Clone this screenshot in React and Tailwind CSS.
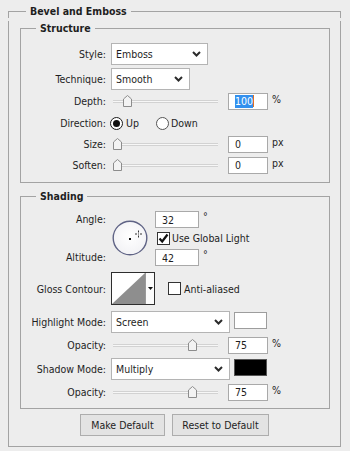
import React from "react";

function Chevron() {
  return (
    <svg width="9" height="6" viewBox="0 0 9 6" className="shrink-0">
      <polyline points="1,1 4.5,4.5 8,1" fill="none" stroke="#2b2b2b" strokeWidth="2" />
    </svg>
  );
}

function Select({ value, w }) {
  return (
    <div className={`${w} h-[22px] shrink-0 bg-white border border-[#b4b4b4] flex items-center justify-between pl-[4px] pr-[6px]`}>
      <span>{value}</span>
      <Chevron />
    </div>
  );
}

function Num({ children, w }) {
  return (
    <div className={`${w} h-[17px] shrink-0 bg-white border border-[#a9a9a9] flex items-center pl-[6px]`}>
      {children}
    </div>
  );
}

function Slider({ pct }) {
  const left = 6 + pct * 101 - 4.5;
  return (
    <div className="relative w-[107px] h-[18px] shrink-0">
      <div className="absolute left-[2px] right-0 top-[8px] h-[3px] border-y border-[#d2d2d2] bg-[#f7f7f7]" />
      <svg className="absolute top-[3px]" style={{ left }} width="9" height="12" viewBox="0 0 9 12">
        <path d="M0.5,11.5 V4 L4.5,0.5 L8.5,4 V11.5 Z" fill="#f3f3f3" stroke="#8c8c8c" />
      </svg>
    </div>
  );
}

function Label({ children }) {
  return <div className="w-[85px] shrink-0 text-right">{children}</div>;
}

function SliderRow({ label, pct, value, unit, highlight, extra }) {
  return (
    <div className={`flex items-center h-[18px] ${extra}`}>
      <Label>{label}</Label>
      <div className="ml-[5px]">
        <Slider pct={pct} />
      </div>
      <div className="ml-[10px]">
        <Num w="w-[40px]">
          {highlight ? (
            <span className="flex items-center">
              <span className="bg-[#3390ee] text-white leading-[13px]">{value}</span>
              <span className="w-[1px] h-[12px] bg-[#e07020]" />
            </span>
          ) : (
            value
          )}
        </Num>
      </div>
      <span className="ml-[4px] self-start">{unit}</span>
    </div>
  );
}

function Radio({ checked }) {
  return (
    <div
      className={`w-[13px] h-[13px] rounded-full bg-white flex items-center justify-center shrink-0 ${
        checked ? "border-[1.5px] border-[#1a1a1a]" : "border border-[#555555]"
      }`}
    >
      {checked && <div className="w-[7px] h-[7px] rounded-full bg-[#111111]" />}
    </div>
  );
}

function Checkbox({ checked }) {
  return (
    <div className="w-[13px] h-[13px] bg-white border border-[#333333] flex items-center justify-center shrink-0">
      {checked && (
        <svg width="11" height="11" viewBox="0 0 11 11">
          <polyline points="1.5,5.5 4.2,8.5 9.5,1.5" fill="none" stroke="#111111" strokeWidth="2.2" />
        </svg>
      )}
    </div>
  );
}

function Dial() {
  return (
    <svg width="38" height="36" viewBox="0 0 38 36">
      <defs>
        <radialGradient id="dg" cx="50%" cy="45%" r="60%">
          <stop offset="0%" stopColor="#ffffff" />
          <stop offset="100%" stopColor="#f1f1f4" />
        </radialGradient>
      </defs>
      <circle cx="19" cy="18" r="16.8" fill="url(#dg)" stroke="#5f6385" strokeWidth="1.4" />
      <rect x="18" y="18" width="2" height="2" fill="#111111" />
      <g stroke="#333333" strokeWidth="1">
        <line x1="27.5" y1="10.5" x2="27.5" y2="12.5" />
        <line x1="27.5" y1="15.5" x2="27.5" y2="17.5" />
        <line x1="24" y1="14" x2="26" y2="14" />
        <line x1="29" y1="14" x2="31" y2="14" />
      </g>
      <rect x="27" y="13.5" width="1" height="1" fill="#333333" />
    </svg>
  );
}

function Contour() {
  return (
    <div className="w-[44px] h-[33px] shrink-0 border border-[#2e2e2e] flex bg-white">
      <svg width="33" height="31" viewBox="0 0 33 31" className="shrink-0">
        <rect width="33" height="31" fill="#ffffff" />
        <polygon points="0,31 33,0 33,31" fill="#8e8e8e" />
      </svg>
      <div className="flex-1 border-l border-[#9a9a9a] flex items-center justify-center bg-[#fbfbfb]">
        <svg width="5" height="3" viewBox="0 0 5 3">
          <polygon points="0,0 5,0 2.5,3" fill="#111111" />
        </svg>
      </div>
    </div>
  );
}

export default function App() {
  return (
    <div className="w-[350px] h-[451px] bg-[#ededed] text-[10.5px] leading-[14px] text-[#1e1e1e] font-['DejaVu_Sans_Condensed','Liberation_Sans',sans-serif] pt-[4px] pl-[8px]">
      <section className="w-[333px]">
        <div className="flex h-[14px]">
          <div className="w-[18px] shrink-0 h-[7px] self-end border-t border-l border-[#a3a3a3]" />
          <h2 className="shrink-0 pl-[4px] pr-[4px] font-bold">Bevel and Emboss</h2>
          <div className="flex-1 h-[7px] self-end border-t border-r border-[#a3a3a3]" />
        </div>
        <div className="h-[426px] border-x border-b border-[#a3a3a3]">
          <fieldset className="ml-[11px] mt-[3px] w-[310px] border border-[#a3a3a3] pt-[8px] pb-[8px] mr-0 mb-0 px-0">
            <legend className="ml-[15px] px-[4px] font-bold">Structure</legend>

            <div className="flex items-center h-[22px]">
              <Label>Style:</Label>
              <div className="ml-[5px]">
                <Select value="Emboss" w="w-[97px]" />
              </div>
            </div>
            <div className="flex items-center h-[22px] mt-[3px]">
              <Label>Technique:</Label>
              <div className="ml-[5px]">
                <Select value="Smooth" w="w-[79px]" />
              </div>
            </div>
            <SliderRow label="Depth:" pct={0.1} value="100" unit="%" highlight extra="mt-[2px]" />
            <div className="flex items-center h-[18px] mt-[4px]">
              <Label>Direction:</Label>
              <div className="ml-[4px] flex items-center">
                <Radio checked />
                <span className="ml-[3px]">Up</span>
                <div className="ml-[17px]">
                  <Radio />
                </div>
                <span className="ml-[2px]">Down</span>
              </div>
            </div>
            <SliderRow label="Size:" pct={0} value="0" unit="px" extra="mt-[3px]" />
            <SliderRow label="Soften:" pct={0} value="0" unit="px" extra="mt-[3px]" />
          </fieldset>

          <fieldset className="ml-[11px] mt-[6px] w-[310px] border border-[#a3a3a3] pt-[8px] pb-[7px] mr-0 mb-0 px-0">
            <legend className="ml-[15px] px-[4px] font-bold">Shading</legend>

            <div className="flex">
              <div className="w-[85px] shrink-0 flex flex-col items-end">
                <div className="h-[16px] flex items-center">Angle:</div>
                <div className="h-[16px] mt-[22px] flex items-center">Altitude:</div>
              </div>
              <div className="ml-[5px] w-[39px] flex items-center">
                <Dial />
              </div>
              <div className="ml-[5px] flex flex-col gap-[4px]">
                <div className="flex items-start h-[16px]">
                  <Num w="w-[44px] h-[16px]">32</Num>
                  <span className="ml-[4px] leading-[10px]">°</span>
                </div>
                <div className="flex items-center h-[14px] ml-[2px]">
                  <Checkbox checked />
                  <span className="ml-[2px]">Use Global Light</span>
                </div>
                <div className="flex items-start h-[16px]">
                  <Num w="w-[44px] h-[16px]">42</Num>
                  <span className="ml-[4px] leading-[10px]">°</span>
                </div>
              </div>
            </div>

            <div className="flex items-center h-[33px] mt-[7px]">
              <Label>Gloss Contour:</Label>
              <div className="ml-[5px]">
                <Contour />
              </div>
              <div className="ml-[13px]">
                <Checkbox />
              </div>
              <span className="ml-[3px]">Anti-aliased</span>
            </div>

            <div className="flex items-center h-[22px] mt-[6px]">
              <Label>Highlight Mode:</Label>
              <div className="ml-[5px]">
                <Select value="Screen" w="w-[119px]" />
              </div>
              <div className="ml-[4px] self-start mt-[1px] w-[33px] h-[17px] bg-white border border-[#9d9d9d]" />
            </div>
            <SliderRow label="Opacity:" pct={0.75} value="75" unit="%" extra="mt-[3px]" />
            <div className="flex items-center h-[22px] mt-[4px]">
              <Label>Shadow Mode:</Label>
              <div className="ml-[5px]">
                <Select value="Multiply" w="w-[119px]" />
              </div>
              <div className="ml-[4px] self-start mt-[1px] w-[33px] h-[17px] bg-black border border-[#555555]" />
            </div>
            <SliderRow label="Opacity:" pct={0.75} value="75" unit="%" extra="mt-[3px]" />
          </fieldset>

          <div className="flex justify-center gap-[7px] mt-[5px]">
            <button className="w-[85px] h-[22px] bg-[#e3e3e3] border border-[#adadad] text-[10.5px] leading-[14px]">
              Make Default
            </button>
            <button className="w-[97px] h-[22px] bg-[#e3e3e3] border border-[#adadad] text-[10.5px] leading-[14px]">
              Reset to Default
            </button>
          </div>
        </div>
      </section>
    </div>
  );
}
